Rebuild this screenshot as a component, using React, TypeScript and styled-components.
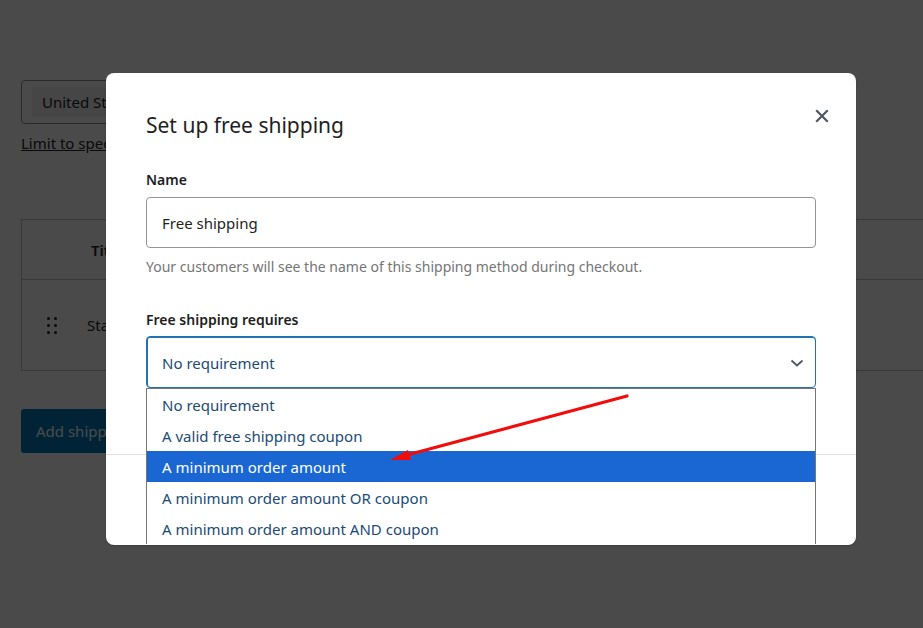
import React from "react";
import styled, { createGlobalStyle } from "styled-components";

const Global = createGlobalStyle`
  html, body { margin: 0; padding: 0; background: #fff; }
  body { width: 923px; height: 628px; overflow: hidden; font-family: "Noto Sans", "Open Sans", sans-serif; }
  #root { position: relative; width: 923px; height: 628px; overflow: hidden; }
`;

const Page = styled.div`
  width: 1000px;
  padding: 80px 0 0 21px;
  display: flex;
  flex-direction: column;
  color: #1d2327;
  font-size: 15px;
`;

const CountrySelect = styled.div`
  width: 520px;
  height: 44px;
  box-sizing: border-box;
  border: 1px solid #8c8f94;
  border-radius: 4px;
  display: flex;
  align-items: center;
  padding: 0 10px;
`;

const Chip = styled.span`
  background: #f0f0f1;
  height: 30px;
  display: flex;
  align-items: center;
  padding: 0 10px;
  font-size: 15px;
  color: #1d2327;
`;

const LimitLink = styled.a`
  margin-top: 9px;
  font-size: 15px;
  line-height: 20px;
  color: #1d2327;
  text-decoration: underline;
`;

const Table = styled.div`
  margin-top: 66px;
  border: 1px solid #c3c4c7;
  display: flex;
  flex-direction: column;
`;

const HeadRow = styled.div`
  height: 59px;
  display: flex;
  align-items: center;
  padding-left: 69px;
  border-bottom: 1px solid #c3c4c7;
  font-weight: 600;
  font-size: 15px;
`;

const BodyRow = styled.div`
  height: 90px;
  display: flex;
  align-items: center;
  padding-left: 25px;
  gap: 30px;
  font-size: 15px;
`;

const Handle = styled.div`
  display: grid;
  grid-template-columns: 3px 3px;
  grid-auto-rows: 3px;
  column-gap: 4px;
  row-gap: 4px;
  span { background: #1d2327; border-radius: 50%; }
`;

const AddButton = styled.button`
  margin-top: 38px;
  align-self: flex-start;
  height: 44px;
  width: 240px;
  padding: 0 15px;
  text-align: left;
  border: none;
  border-radius: 3px;
  background: #007cba;
  color: #fff;
  font-family: inherit;
  font-size: 15px;
`;

const Overlay = styled.div`
  position: absolute;
  inset: 0;
  background: rgba(0, 0, 0, 0.71);
  display: flex;
  align-items: flex-start;
  padding: 73px 0 0 106px;
`;

const Modal = styled.div`
  position: relative;
  width: 750px;
  height: 472px;
  background: #fff;
  border-radius: 8px;
  overflow: hidden;
  display: flex;
  flex-direction: column;
  box-shadow: 0 1px 2px rgba(0, 0, 0, 0.2);
`;

const Header = styled.div`
  padding: 36px 40px 0;
`;

const Title = styled.h1`
  margin: 0;
  font-size: 21px;
  line-height: 32px;
  font-weight: 400;
  color: #1e1e1e;
`;

const CloseButton = styled.button`
  position: absolute;
  top: 31px;
  right: 22px;
  width: 24px;
  height: 24px;
  border: none;
  background: none;
  padding: 0;
  display: flex;
  align-items: center;
  justify-content: center;
`;

const Body = styled.div`
  padding: 0 40px;
  display: flex;
  flex-direction: column;
`;

const Label = styled.div<{ $top: number }>`
  margin-top: ${(p) => p.$top}px;
  font-size: 14px;
  line-height: 20px;
  font-weight: 600;
  color: #1e1e1e;
`;

const Input = styled.div`
  margin-top: 7px;
  height: 51px;
  box-sizing: border-box;
  border: 1px solid #949494;
  border-radius: 4px;
  display: flex;
  align-items: center;
  padding: 1px 15px 0;
  font-size: 15px;
  color: #1e1e1e;
`;

const Help = styled.div`
  margin-top: 10px;
  font-size: 14px;
  line-height: 18px;
  color: #757575;
`;

const Select = styled.div`
  margin-top: 6px;
  height: 52px;
  box-sizing: border-box;
  border: 1px solid #2271b1;
  box-shadow: inset 1px 0 0 #2271b1, inset 0 1px 0 #2271b1;
  border-radius: 4px;
  display: flex;
  align-items: center;
  justify-content: space-between;
  padding: 2px 6px 0 15px;
  font-size: 15px;
  color: #1b4b75;
`;

const Footer = styled.div`
  margin-top: auto;
  height: 90px;
  border-top: 1px solid #e0e0e0;
`;

const Dropdown = styled.ul`
  position: absolute;
  left: 40px;
  top: 315px;
  width: 670px;
  box-sizing: border-box;
  margin: 0;
  padding: 0;
  list-style: none;
  background: #fff;
  border: 1px solid #767676;
  border-bottom: none;
`;

const Option = styled.li<{ $active?: boolean }>`
  height: 31px;
  display: flex;
  align-items: center;
  padding: 1px 0 0 15px;
  box-sizing: border-box;
  font-size: 15px;
  color: ${(p) => (p.$active ? "#fff" : "#1b4b75")};
  background: ${(p) => (p.$active ? "#1a67d3" : "#fff")};
`;

const Arrow = styled.svg`
  position: absolute;
  left: 0;
  top: 0;
  pointer-events: none;
`;

const options = [
  "No requirement",
  "A valid free shipping coupon",
  "A minimum order amount",
  "A minimum order amount OR coupon",
  "A minimum order amount AND coupon",
];

export default function App() {
  return (
    <>
      <Global />
      <Page>
        <CountrySelect>
          <Chip>United States (US)</Chip>
        </CountrySelect>
        <LimitLink>Limit to specific ZIP/postcodes</LimitLink>
        <Table>
          <HeadRow>Title</HeadRow>
          <BodyRow>
            <Handle>
              <span /><span /><span /><span /><span /><span />
            </Handle>
            <span>Standard</span>
          </BodyRow>
        </Table>
        <AddButton>Add shipping method</AddButton>
      </Page>
      <Overlay>
        <Modal>
          <Header>
            <Title>Set up free shipping</Title>
          </Header>
          <CloseButton aria-label="Close">
            <svg width="14" height="14" viewBox="0 0 14 14">
              <path d="M2 2L12 12M12 2L2 12" stroke="#50575e" strokeWidth="2.2" strokeLinecap="square" />
            </svg>
          </CloseButton>
          <Body>
            <Label $top={29}>Name</Label>
            <Input>Free shipping</Input>
            <Help>Your customers will see the name of this shipping method during checkout.</Help>
            <Label $top={34}>Free shipping requires</Label>
            <Select>
              <span>No requirement</span>
              <svg width="24" height="24" viewBox="0 0 24 24">
                <path d="M6.5 9.5L12 14.5L17.5 9.5" fill="none" stroke="#50575e" strokeWidth="1.8" />
              </svg>
            </Select>
          </Body>
          <Footer />
          <Dropdown>
            {options.map((o, i) => (
              <Option key={o} $active={i === 2}>
                {o}
              </Option>
            ))}
          </Dropdown>
        </Modal>
      </Overlay>
      <Arrow width="923" height="628" viewBox="0 0 923 628">
        <line x1="627" y1="396" x2="407" y2="455" stroke="#f20d0d" strokeWidth="3.2" strokeLinecap="round" />
        <polygon points="390,460 408,450 411,460" fill="#f20d0d" />
      </Arrow>
    </>
  );
}
